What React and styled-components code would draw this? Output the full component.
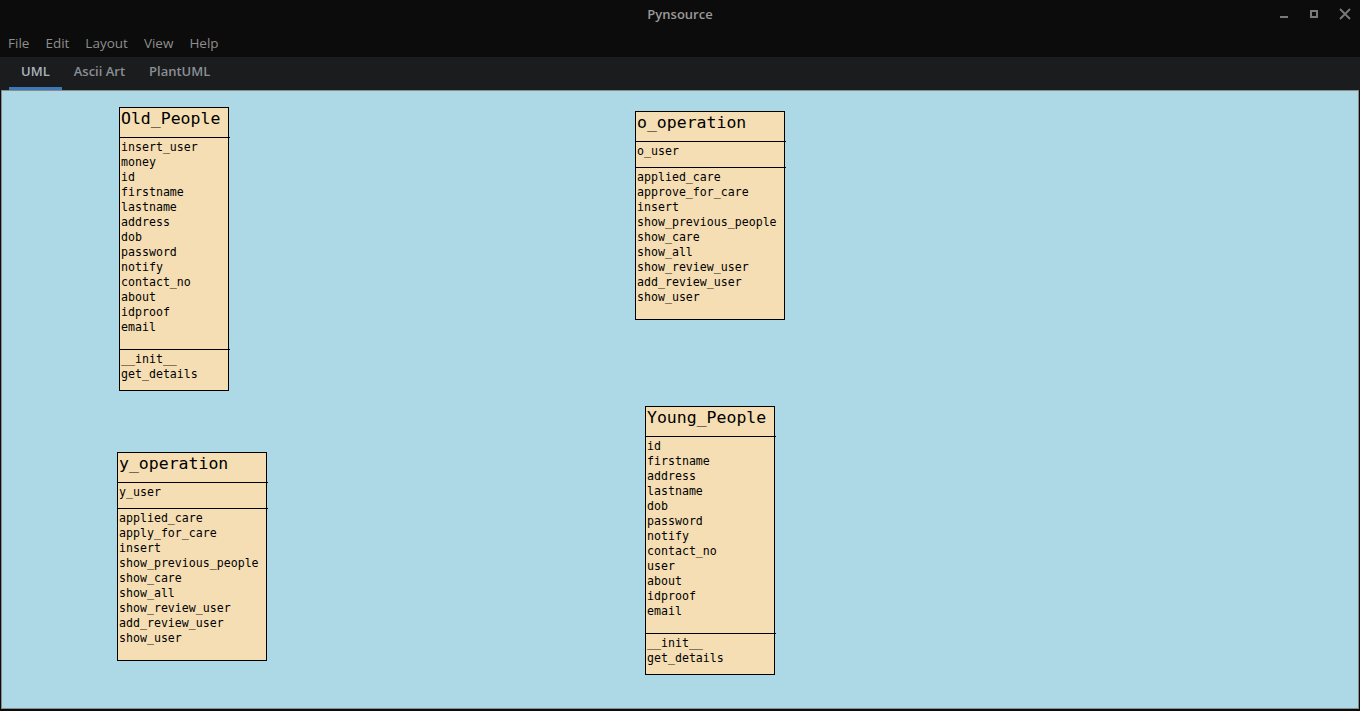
import React from 'react';
import styled, { createGlobalStyle } from 'styled-components';

const GlobalStyle = createGlobalStyle`
  html, body {
    margin: 0;
    padding: 0;
    background: #0c0c0c;
  }
  #root {
    height: 100vh;
  }
`;

const Window = styled.div`
  display: flex;
  flex-direction: column;
  height: 711px;
  width: 1360px;
  background: #0c0c0c;
  font-family: "Open Sans", "Noto Sans", sans-serif;
  overflow: hidden;
`;

const TitleBar = styled.div`
  position: relative;
  display: flex;
  align-items: center;
  justify-content: center;
  box-sizing: border-box;
  height: 30px;
  padding-bottom: 2px;
  flex-shrink: 0;
  color: #9a9a9a;
  font-size: 13px;
  font-weight: 600;
`;

const WindowControls = styled.div`
  position: absolute;
  right: 8px;
  top: 0;
  height: 28px;
  display: flex;
  align-items: center;
  gap: 18px;
`;

const MenuBar = styled.div`
  display: flex;
  align-items: center;
  box-sizing: border-box;
  height: 27px;
  padding: 0 0 2px 8px;
  gap: 16px;
  flex-shrink: 0;
`;

const MenuItem = styled.span`
  color: #8e8e8e;
  font-size: 13.5px;
`;

const TabBar = styled.div`
  display: flex;
  align-items: stretch;
  height: 33px;
  padding-left: 9px;
  background: #1b1c1e;
  flex-shrink: 0;
`;

const Tab = styled.div`
  display: flex;
  align-items: center;
  padding: 0 12px 2px;
  font-size: 13px;
  font-weight: 600;
  color: ${p => (p.active ? '#a9b3bd' : '#8a8f95')};
  border-bottom: 3px solid ${p => (p.active ? '#3d78b8' : 'transparent')};
`;

const Canvas = styled.div`
  position: relative;
  flex: 1;
  margin: 0 1px 2px 1px;
  background: #add8e6;
  border: 1px solid #8a8a8a;
`;

const ClassBox = styled.div`
  position: absolute;
  left: ${p => p.x}px;
  top: ${p => p.y}px;
  width: ${p => p.w}px;
  box-sizing: border-box;
  background: #f5deb3;
  border: 1px solid #000;
  font-family: "DejaVu Sans Mono", "Liberation Mono", monospace;
  color: #000;
`;

const ClassName = styled.div`
  height: 29px;
  padding-left: 1px;
  font-size: 16.5px;
  line-height: 21px;
`;

const Rule = styled.div`
  height: 1px;
  background: #000;
  margin-right: -2px;
`;

const Section = styled.div`
  height: ${p => p.h}px;
  box-sizing: border-box;
  padding: 2px 0 0 1px;
  font-size: 11.6px;
  line-height: 15px;
  white-space: pre;
`;

const classes = [
  {
    name: 'Old_People',
    x: 117,
    y: 16,
    w: 110,
    attrH: 211,
    methH: 40,
    attrs: ['insert_user', 'money', 'id', 'firstname', 'lastname', 'address', 'dob', 'password', 'notify', 'contact_no', 'about', 'idproof', 'email'],
    methods: ['__init__', 'get_details']
  },
  {
    name: 'o_operation',
    x: 633,
    y: 20,
    w: 150,
    attrH: 25,
    methH: 151,
    attrs: ['o_user'],
    methods: ['applied_care', 'approve_for_care', 'insert', 'show_previous_people', 'show_care', 'show_all', 'show_review_user', 'add_review_user', 'show_user']
  },
  {
    name: 'y_operation',
    x: 115,
    y: 361,
    w: 150,
    attrH: 25,
    methH: 151,
    attrs: ['y_user'],
    methods: ['applied_care', 'apply_for_care', 'insert', 'show_previous_people', 'show_care', 'show_all', 'show_review_user', 'add_review_user', 'show_user']
  },
  {
    name: 'Young_People',
    x: 643,
    y: 315,
    w: 130,
    attrH: 196,
    methH: 40,
    attrs: ['id', 'firstname', 'address', 'lastname', 'dob', 'password', 'notify', 'contact_no', 'user', 'about', 'idproof', 'email'],
    methods: ['__init__', 'get_details']
  }
];

function UmlClass({ c }) {
  return (
    <ClassBox x={c.x} y={c.y} w={c.w}>
      <ClassName>{c.name}</ClassName>
      <Rule />
      <Section h={c.attrH}>{c.attrs.join('\n')}</Section>
      <Rule />
      <Section h={c.methH}>{c.methods.join('\n')}</Section>
    </ClassBox>
  );
}

export default function App() {
  return (
    <Window>
      <GlobalStyle />
      <TitleBar>
        Pynsource
        <WindowControls>
          <svg width="12" height="12" viewBox="0 0 12 12">
            <rect x="2" y="8" width="8" height="2" fill="#7a7a7a" />
          </svg>
          <svg width="12" height="12" viewBox="0 0 12 12">
            <rect x="3" y="3" width="6" height="6" fill="none" stroke="#7a7a7a" strokeWidth="2" />
          </svg>
          <svg width="14" height="14" viewBox="0 0 14 14">
            <path d="M2 2 L12 12 M12 2 L2 12" stroke="#7a7a7a" strokeWidth="1.8" />
          </svg>
        </WindowControls>
      </TitleBar>
      <MenuBar>
        {['File', 'Edit', 'Layout', 'View', 'Help'].map(m => (
          <MenuItem key={m}>{m}</MenuItem>
        ))}
      </MenuBar>
      <TabBar>
        <Tab active>UML</Tab>
        <Tab>Ascii Art</Tab>
        <Tab>PlantUML</Tab>
      </TabBar>
      <Canvas>
        {classes.map(c => (
          <UmlClass key={c.name} c={c} />
        ))}
      </Canvas>
    </Window>
  );
}
